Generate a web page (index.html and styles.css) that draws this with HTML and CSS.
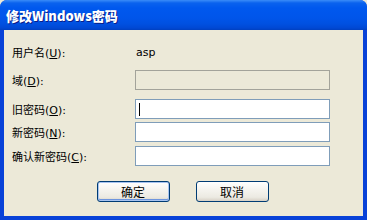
FILE: index.html
```html
<!DOCTYPE html>
<html lang="zh">
<head>
<meta charset="utf-8">
<title>修改Windows密码</title>
<link rel="stylesheet" href="styles.css">
</head>
<body>
<div class="window">
  <div class="titlebar"><span class="title">修改Windows密码</span></div>
  <div class="body">
    <div class="row r1">
      <span class="label">用户名(<u>U</u>):</span>
      <span class="value">asp</span>
    </div>
    <div class="row r2">
      <span class="label">域(<u>D</u>):</span>
      <span class="input disabled"></span>
    </div>
    <div class="row r3">
      <span class="label">旧密码(<u>O</u>):</span>
      <span class="input"><span class="caret"></span></span>
    </div>
    <div class="row r4">
      <span class="label">新密码(<u>N</u>):</span>
      <span class="input"></span>
    </div>
    <div class="row r5">
      <span class="label">确认新密码(<u>C</u>):</span>
      <span class="input"></span>
    </div>
    <div class="buttons">
      <button class="btn default">确定</button>
      <button class="btn">取消</button>
    </div>
  </div>
</div>
</body>
</html>
```

FILE: styles.css
```css
html, body {
  margin: 0;
  padding: 0;
  background: #ECE9D8;
}
body {
  width: 367px;
  height: 220px;
  overflow: hidden;
  font-family: "DejaVu Sans", "Noto Sans CJK SC", sans-serif;
  font-size: 11px;
  color: #000;
}
.window {
  width: 367px;
  height: 220px;
  box-sizing: border-box;
  display: flex;
  flex-direction: column;
  background: #0842D8;
  border-radius: 7px 7px 0 0;
  overflow: hidden;
}
.titlebar {
  height: 30px;
  flex: 0 0 30px;
  display: flex;
  align-items: center;
  padding-left: 6px;
  background: linear-gradient(to bottom, #3A8CF8 0px, #0A62EE 3px, #0058EE 8px, #0055EA 18px, #0050E0 24px, #0048D4 28px, #0040C0 30px);
}
.title {
  color: #fff;
  font-family: "Noto Sans CJK SC", sans-serif;
  font-weight: 900;
  font-size: 13px;
  text-shadow: 1px 1px 0 #0A1E8A;
  padding-top: 1px;
}
.body {
  flex: 1;
  margin: 0 4px 4px 4px;
  background: #ECE9D8;
  padding: 12px 0 0 8px;
  display: flex;
  flex-direction: column;
}
.row {
  display: flex;
  align-items: center;
  height: 20px;
}
.r2 { margin-top: 8px; }
.r3 { margin-top: 9px; }
.r4 { margin-top: 3px; }
.r5 { margin-top: 4px; }
.label {
  width: 123px;
  flex: 0 0 123px;
  white-space: nowrap;
}
.label u {
  text-decoration: underline;
  text-underline-offset: 1px;
}
.value {
  padding-left: 1px;
}
.input {
  width: 195px;
  height: 20px;
  box-sizing: border-box;
  border: 1px solid #7F9DB9;
  background: #fff;
  display: flex;
  align-items: center;
  padding-left: 3px;
}
.input.disabled {
  background: #ECE9D8;
  border-color: #A3A39A;
}
.caret {
  width: 1px;
  height: 13px;
  background: #000;
}
.buttons {
  margin-top: 15px;
  display: flex;
  justify-content: center;
  gap: 26px;
  padding-right: 10px;
}
.btn {
  width: 73px;
  height: 21px;
  box-sizing: border-box;
  border: 1px solid #003C74;
  border-radius: 3px;
  background: linear-gradient(to bottom, #FFFFFF 0%, #F5F4EF 40%, #ECEAE2 80%, #D6D0C5 100%);
  font-family: "Noto Sans CJK SC", sans-serif;
  font-size: 12px;
  color: #000;
  padding: 0;
  line-height: 18px;
}
.btn.default {
  box-shadow: inset 0 0 0 1px #A8C4F0, inset 0 -1px 0 1px #6E95DE;
}
```
